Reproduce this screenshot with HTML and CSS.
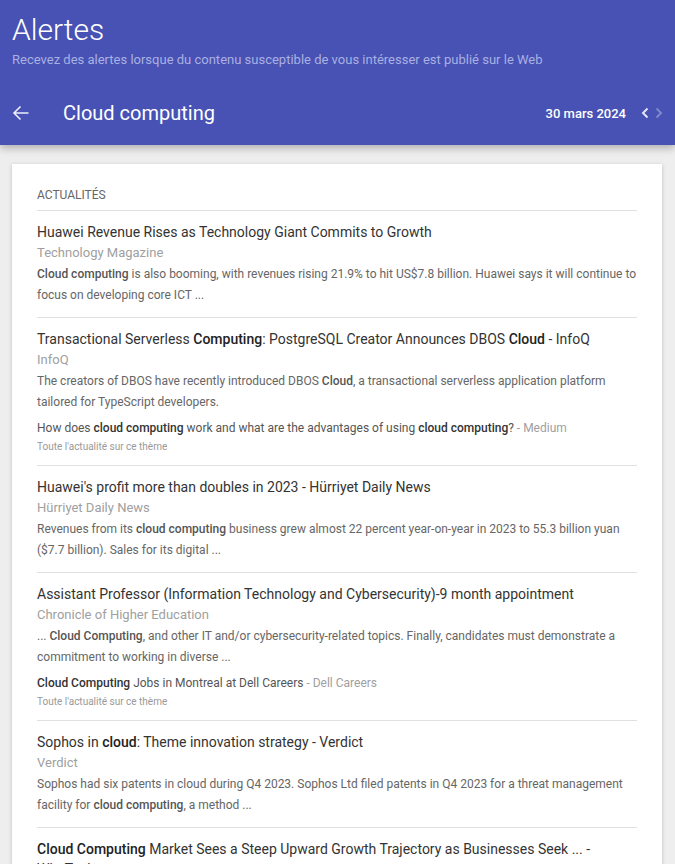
FILE: index.html
```html
<!DOCTYPE html>
<html lang="fr">
<head>
<meta charset="utf-8">
<title>Alertes</title>
<link rel="stylesheet" href="styles.css">
</head>
<body>
<header class="top">
  <h1 class="app-title">Alertes</h1>
  <p class="app-sub">Recevez des alertes lorsque du contenu susceptible de vous intéresser est publié sur le Web</p>
  <div class="nav">
    <svg class="back" width="18" height="18" viewBox="0 0 18 18"><path d="M16.5 9H2M8.5 2.5 2 9l6.5 6.5" fill="none" stroke="#fff" stroke-width="1.6"/></svg>
    <span class="query">Cloud computing</span>
    <span class="date">30 mars 2024</span>
    <svg class="chev prev" width="8" height="12" viewBox="0 0 8 12"><path d="M6.5 1.5 2 6l4.5 4.5" fill="none" stroke="#fff" stroke-width="2"/></svg>
    <svg class="chev next" width="8" height="12" viewBox="0 0 8 12"><path d="M1.5 1.5 6 6l-4.5 4.5" fill="none" stroke="#fff" stroke-width="2"/></svg>
  </div>
</header>

<main class="card">
  <div class="section">ACTUALITÉS</div>

  <article class="item">
    <div class="title">Huawei Revenue Rises as Technology Giant Commits to Growth</div>
    <div class="source">Technology Magazine</div>
    <div class="snippet"><b>Cloud computing</b> is also booming, with revenues rising 21.9% to hit US$7.8 billion. Huawei says it will continue to focus on developing core ICT ...</div>
  </article>

  <article class="item">
    <div class="title">Transactional Serverless <b>Computing</b>: PostgreSQL Creator Announces DBOS <b>Cloud</b> - InfoQ</div>
    <div class="source">InfoQ</div>
    <div class="snippet">The creators of DBOS have recently introduced DBOS <b>Cloud</b>, a transactional serverless application platform tailored for TypeScript developers.</div>
    <div class="related">How does <b>cloud computing</b> work and what are the advantages of using <b>cloud computing</b>? <span class="rsrc">- Medium</span></div>
    <div class="more">Toute l'actualité sur ce thème</div>
  </article>

  <article class="item">
    <div class="title">Huawei's profit more than doubles in 2023 - Hürriyet Daily News</div>
    <div class="source">Hürriyet Daily News</div>
    <div class="snippet">Revenues from its <b>cloud computing</b> business grew almost 22 percent year-on-year in 2023 to 55.3 billion yuan ($7.7 billion). Sales for its digital ...</div>
  </article>

  <article class="item">
    <div class="title">Assistant Professor (Information Technology and Cybersecurity)-9 month appointment</div>
    <div class="source">Chronicle of Higher Education</div>
    <div class="snippet">... <b>Cloud Computing</b>, and other IT and/or cybersecurity-related topics. Finally, candidates must demonstrate a commitment to working in diverse ...</div>
    <div class="related"><b>Cloud Computing</b> Jobs in Montreal at Dell Careers <span class="rsrc">- Dell Careers</span></div>
    <div class="more">Toute l'actualité sur ce thème</div>
  </article>

  <article class="item">
    <div class="title">Sophos in <b>cloud</b>: Theme innovation strategy - Verdict</div>
    <div class="source">Verdict</div>
    <div class="snippet">Sophos had six patents in cloud during Q4 2023. Sophos Ltd filed patents in Q4 2023 for a threat management facility for <b>cloud computing</b>, a method ...</div>
  </article>

  <article class="item">
    <div class="title"><b>Cloud Computing</b> Market Sees a Steep Upward Growth Trajectory as Businesses Seek ... - WhaTech</div>
    <div class="source">WhaTech</div>
  </article>
</main>
</body>
</html>
```

FILE: styles.css
```css
html, body {
  margin: 0;
  padding: 0;
}
body {
  background: #eeeeee;
  font-family: Roboto, "Noto Sans", Arial, sans-serif;
  height: 864px;
  overflow: hidden;
}
.top {
  background: #4752b4;
  color: #fff;
  padding: 12px 12px 8px 12px;
  box-shadow: 0 3px 8px rgba(0,0,0,0.28);
  position: relative;
  z-index: 1;
}
.app-title {
  margin: 0;
  font-size: 30px;
  font-weight: 300;
  line-height: 36px;
}
.app-sub {
  margin: 3px 0 0 0;
  font-size: 13px;
  line-height: 18px;
  color: #aab0e2;
}
.nav {
  margin-top: 20px;
  height: 48px;
  display: flex;
  align-items: center;
}
.back {
  width: 18px;
  height: 18px;
  opacity: 0.9;
}
.query {
  margin-left: 33px;
  font-size: 20px;
  line-height: 24px;
  flex: 1;
}
.date {
  font-size: 13px;
  font-weight: 500;
}
.chev {
  display: block;
}
.prev {
  margin-left: 15px;
  opacity: 0.85;
}
.next {
  margin-left: 6px;
  margin-right: 0;
  opacity: 0.3;
}
.card {
  display: block;
  background: #fff;
  margin: 19px 13px 0 12px;
  padding: 0 25px;
  box-shadow: 0 1px 4px rgba(0,0,0,0.2);
}
.section {
  padding-top: 24px;
  font-size: 12px;
  line-height: 14px;
  color: #666;
  padding-bottom: 8px;
  border-bottom: 1px solid #e0e0e0;
}
.item {
  padding: 11px 0 11px 0;
  border-bottom: 1px solid #e0e0e0;
}
.title {
  font-size: 14px;
  line-height: 20px;
  color: #333;
}
.title b, .snippet b, .related b {
  font-weight: 500;
}
.title b {
  color: #222;
}
.source {
  font-size: 13px;
  line-height: 22px;
  color: #a0a0a0;
}
.snippet {
  font-size: 12px;
  line-height: 21px;
  color: #666;
}
.snippet b {
  color: #555;
}
.related {
  margin-top: 6px;
  font-size: 12px;
  line-height: 18px;
  color: #555;
}
.related b {
  color: #333;
}
.rsrc {
  color: #a0a0a0;
}
.more {
  margin-top: 3px;
  font-size: 10px;
  line-height: 14px;
  color: #999;
}
```
